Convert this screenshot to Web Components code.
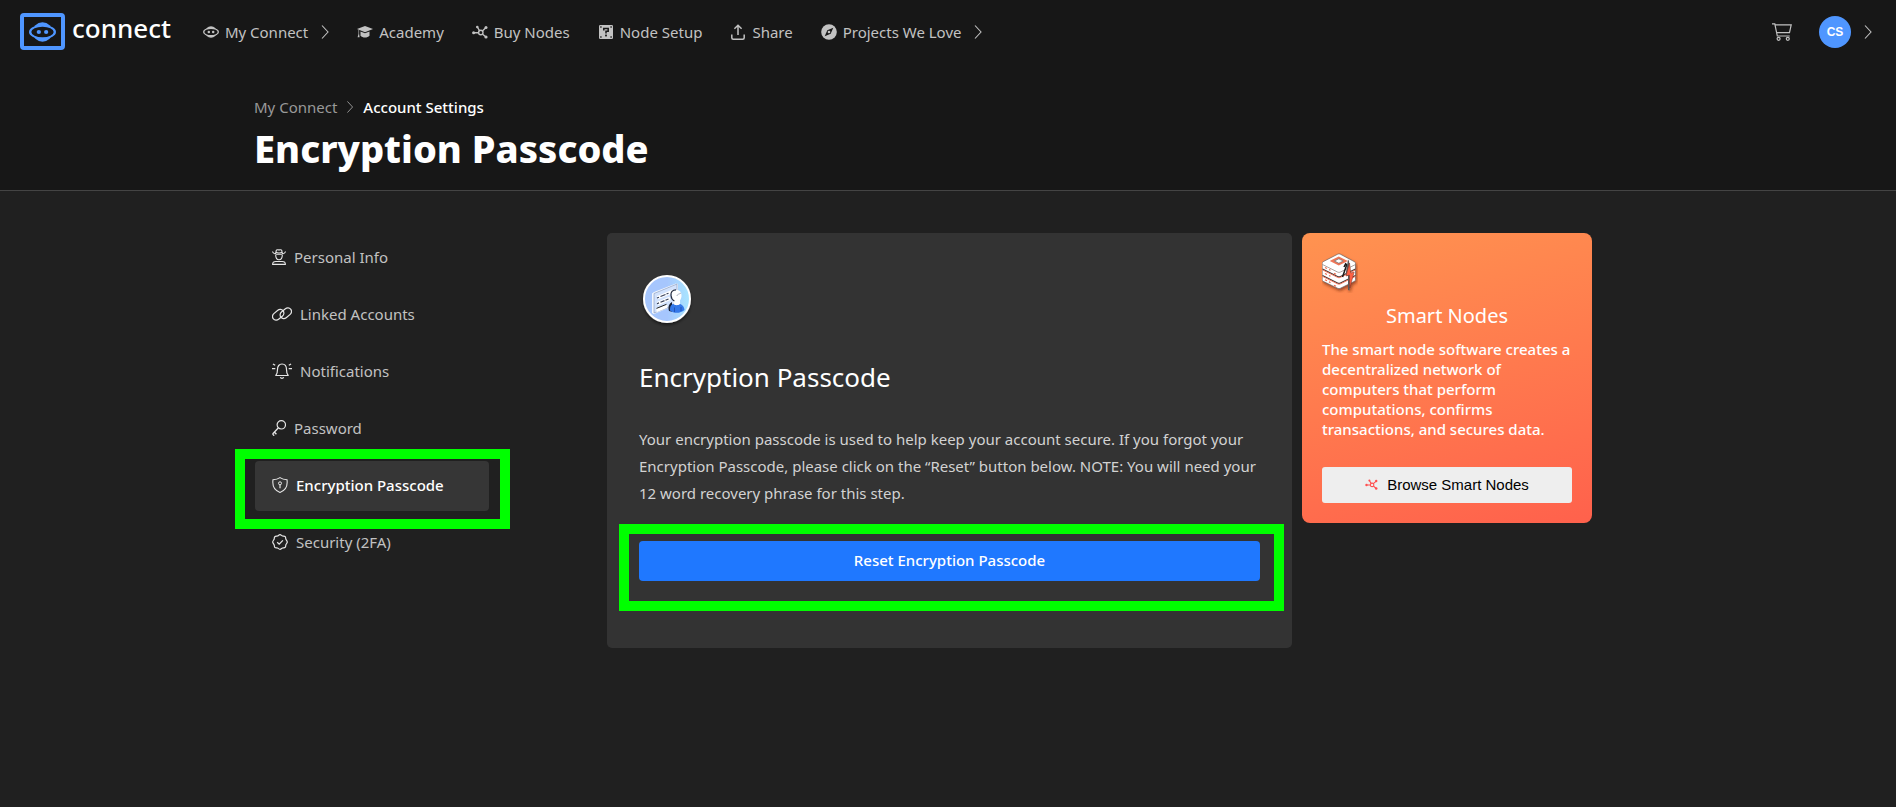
<!DOCTYPE html>
<html lang="en">
<head>
  <meta charset="utf-8">
  <meta name="viewport" content="width=device-width, initial-scale=1">
  <title>Encryption Passcode - connect</title>
  <style>
    body {
      margin: 0;
      min-height: 100vh;
      background: #202020;
      color: #fff;
      font-family: "Noto Sans", sans-serif;
      font-size: 15px;
      line-height: 24px;
    }
  </style>
</head>
<body>
  <account-page></account-page>

  <script>
    const icons = {
      bot: { box: '0 0 28 20', body: `
        <ellipse cx="14" cy="10" rx="14" ry="7.2" fill="currentColor"/>
        <ellipse cx="14" cy="10" rx="10.4" ry="10" fill="currentColor"/>
        <ellipse cx="14" cy="10" rx="11.6" ry="5.4" fill="#171717"/>
        <circle cx="10.2" cy="10" r="2.2" fill="currentColor"/>
        <circle cx="17.8" cy="10" r="2.2" fill="currentColor"/>` },
      chevron: { box: '0 0 8 14', body: `
        <path d="M1 .5 7 7l-6 6.5" fill="none" stroke="currentColor" stroke-width="1.1"/>` },
      academy: { box: '0 0 16 14', body: `
        <path d="M8 1 0 4l8 3.2L16 4z" fill="currentColor"/>
        <path d="M3.5 6.400v4.400C4.600 12 6.200 12.600 8 12.600s3.400-.6 4.500-1.800V6.400L8 8.200z" fill="currentColor"/>
        <path d="M1.500 4.800v4.200l-.9 3.200h2L2.100 9V5" fill="currentColor"/>` },
      nodes: { box: '0 0 16 14', body: `
        <g stroke="currentColor" stroke-width="1.4" fill="none">
          <path d="M1.500 7.700h5M5.300 2l2.200 3.600M14 2.600l-3.600 3.400M14 12l-3.400-2.800"/>
          <circle cx="8.800" cy="7.500" r="2.200"/>
        </g>
        <g fill="currentColor">
          <circle cx="1.600" cy="7.700" r="1.500"/><circle cx="5.300" cy="2" r="1.300"/>
          <circle cx="14" cy="2.600" r="1.500"/><circle cx="14" cy="12" r="1.600"/>
        </g>` },
      setup: { box: '-1 0 16 14', body: `
        <rect width="14" height="14" rx="1.2" fill="currentColor"/>
        <g fill="#171717">
          <rect x="1.200" y="1.300" width="1.400" height="1.400"/><rect x="11.400" y="1.300" width="1.400" height="1.400"/>
          <rect x="1.200" y="11.300" width="1.400" height="1.400"/><rect x="11.400" y="11.300" width="1.400" height="1.400"/>
          <rect x="6.100" y="9.600" width="1.800" height="1.800"/>
        </g>
        <path d="M4.800 5.600V3.500h4.400v2.800H7v2.200" fill="none" stroke="#171717" stroke-width="1.5"/>` },
      share: { box: '-1 0 16 16', body: `
        <path d="M7 11V1.300M3.400 4.800 7 1.200l3.600 3.600M.8 10.500v3.200c0 .9.600 1.500 1.500 1.500h9.400c.9 0 1.500-.6 1.500-1.500v-3.200"
          fill="none" stroke="currentColor" stroke-width="1.5"/>` },
      compass: { box: '0 0 16 16', body: `
        <circle cx="8" cy="8" r="7.8" fill="currentColor"/>
        <path d="M12.300 3.700 9.700 9.700l-6 2.600 2.600-6z" fill="#171717"/>
        <circle cx="8" cy="8" r="1.300" fill="currentColor"/>` },
      cart: { box: '0 0 20 18', body: `
        <g fill="none" stroke="currentColor" stroke-width="1.2">
          <path d="M0 .8h2.800l2.500 12.200h12.400M3.200 1.800h16l-1.700 7.800H4.700"/>
          <circle cx="6.600" cy="15.800" r="1.500"/><circle cx="15.800" cy="15.800" r="1.500"/>
        </g>` },
      spy: { box: '0 0 14 16', body: `
        <g fill="none" stroke="currentColor" stroke-width="1.1" stroke-linejoin="round">
          <path d="M.5 2.500C1 4.700 3.500 5.300 7 5.300s6-.6 6.500-2.800M3.600 4.500 4.300 1.300C4.900.2 6 .8 7 1c1-.2 2.100-.8 2.700.3l.7 3.200"/>
          <path d="M3.900 3.300c1.800.8 4.400.8 6.200 0M3.700 6c0 3 1.400 4.700 3.300 4.700S10.300 9 10.300 6"/>
          <path d="M.6 15.400c0-2 1.200-2.900 3.200-2.900h6.400c2 0 3.200.9 3.200 2.900z"/>
        </g>` },
      link: { box: '0 0 20 14', body: `
        <g fill="none" stroke="currentColor" stroke-width="1.2">
          <rect x="-6.300" y="-3.700" width="12.600" height="7.400" rx="3.700" transform="translate(6.200 7.800) rotate(-40)"/>
          <rect x="-6.300" y="-3.700" width="12.600" height="7.400" rx="3.700" transform="translate(13.800 6.200) rotate(-40)"/>
        </g>` },
      bell: { box: '0 0 20 16', body: `
        <path d="M3.800 12.500c1.400-1.500 1.700-3 1.700-6C5.500 3.300 7.300 1 10 1s4.500 2.300 4.500 5.500c0 3 .3 4.500 1.700 6zM8.300 14.300c.6 1.300 2.800 1.300 3.400 0M0 5.700h3.300M.9 1l2.300 1.300M20 5.700h-3.300M19.100 1l-2.300 1.300"
          fill="none" stroke="currentColor" stroke-width="1.2" stroke-linejoin="round"/>` },
      key: { box: '0 0 14 16', body: `
        <path d="M6.200 8 .6 14M2.400 12l2 2.200M.6 14l1.600 1.700" fill="none" stroke="currentColor" stroke-width="1.3"/>
        <circle cx="9.300" cy="4.800" r="4.200" fill="none" stroke="currentColor" stroke-width="1.2"/>` },
      shield: { box: '0 0 16 16', body: `
        <path d="M8 .6C6 2 3.700 2.600 1 2.700.2 8.500 2 13.300 8 15.400c6-2.100 7.800-6.900 7-12.700C12.300 2.600 10 2 8 .6z"
          fill="none" stroke="currentColor" stroke-width="1.1"/>
        <circle cx="8" cy="6.300" r="1.500" fill="none" stroke="currentColor"/>
        <path d="M8 7.800v3.400" stroke="currentColor" stroke-width="1.2"/>` },
      verified: { box: '0 0 16 16', body: `
        <path d="M8 .7c1.100 0 1.600 1 2.500 1.300s2-.1 2.700.7.300 1.800.7 2.600S15.300 7 15.300 8s-1 1.800-1.400 2.700.1 1.900-.7 2.600-1.800.3-2.700.7S9.100 15.300 8 15.300s-1.600-1-2.500-1.300-2 .1-2.700-.7-.3-1.800-.7-2.600S.7 9 .7 8s1-1.800 1.400-2.700-.1-1.900.7-2.600 1.800-.3 2.700-.7S6.900.7 8 .7z"
          fill="none" stroke="currentColor" stroke-width="1.2"/>
        <path d="m5.200 8.200 2 1.900 3.700-3.700" fill="none" stroke="currentColor" stroke-width="1.3"/>` },
      profile: { box: '0 0 56 56', body: `
        <defs>
          <linearGradient id="sky"><stop offset=".5" stop-color="#a6c6fd"/><stop offset="1" stop-color="#a8e6ff"/></linearGradient>
          <filter id="drop" x="-20%" y="-20%" width="140%" height="140%"><feDropShadow dx="0" dy="2" stdDeviation="1.5" flood-opacity=".5"/></filter>
        </defs>
        <circle cx="28" cy="28" r="23" fill="url(#sky)" stroke="#fff" stroke-width="2" filter="url(#drop)"/>
        <path d="M13 22.500 15 21 37 12.500 39 13v20L15 43l-2-1z" fill="#f4f8ff"/>
        <path d="M15 22.500 38 13v20L15 42z" fill="#d2e2fc" stroke="#8595b5" stroke-width=".6"/>
        <path d="M18.500 26.800 34.500 20M18.500 32.600 31 27.400" stroke="#fff" stroke-width="3.4"/>
        <path d="m18 27 2-.8m1.500-.7 5-2m1-.5 2-.8M18 32.700l2-.8m1.500-.7 4-1.600m1-.4 3-1.200" fill="none" stroke="#38415a" stroke-width="1.2"/>
        <path d="m17.500 37.600 9-3.700c1.500-.5 2 .3 2 1.400s-.8 1.800-2 2.300l-9 3.700z" fill="#fff"/>
        <path d="m17.500 37.400 10-4.100" stroke="#222"/>
        <path d="M33 31c-3 1.500-4.300 5-3 9l3 .7z" fill="#172036"/>
        <path d="M31 39.500c-.3-4.500 1.500-7 6-7.500 5 .4 8 2.500 8.500 7-4 3.500-10.500 3.900-14.500.5z" fill="#3478e8"/>
        <path d="M35.500 36.500v4.500M42 36v4" stroke="#1f4ba8" stroke-width=".8"/>
        <path d="M34.500 29h6.500v4c-1.700 1.600-4.800 1.600-6.500 0z" fill="#fff"/>
        <path d="M32.500 24.500c0-4 2.400-5.500 5.300-5.500 3.200 0 4.700 2.500 4.700 5.500s-1.500 6.300-4.300 6.300c-3.300 0-5.700-2.500-5.700-6.300z" fill="#fff"/>
        <path d="M37 18.800c-3.600 0-5.400 2.600-5 5.700.3 3 1.700 4.700 3.400 5.500" fill="none" stroke="#252c3d" stroke-width="1.2"/>
        <path d="M42 22c-1.500 1.200-3.500.8-4.200 3" fill="none" stroke="#8b94a8" stroke-width=".7"/>` },
      server: { box: '0 0 36 40', body: `
        <defs><filter id="soft" x="-20%" y="-20%" width="150%" height="150%"><feDropShadow dx="1" dy="2" stdDeviation="1.4" flood-color="#6b2616" flood-opacity=".65"/></filter></defs>
        <g filter="url(#soft)">
          <path d="M1.500 8.500 15.500 1.300c1-.5 2-.5 3 0L32 8.500c1 .5 1.500 1 1.500 2v16c0 1-.5 1.500-1.500 2L18.500 35.200c-1 .5-2 .5-3 0L1.500 28.500c-1-.5-1.300-1-1.300-2v-16c0-1 .3-1.500 1.300-2z" fill="#fff" stroke="#5b5350" stroke-width=".6"/>
          <path d="M.5 11.500 15.500 19c1 .5 2 .5 3 0l15-7.500" fill="none" stroke="#8a7d78" stroke-width=".7"/>
          <path d="M.5 16 15.500 23.500c1 .5 2 .5 3 0L33.500 16M.5 22.500 15.500 30c1 .5 2 .5 3 0l15-7.500" fill="none" stroke="#3f3836" stroke-width="1.2"/>
          <path d="M.5 16.800 15.500 24.300c1 .5 2 .5 3 0l15-7.500M.5 23.300l15 7.500c1 .5 2 .5 3 0l15-7.500" fill="none" stroke="#f5694a" stroke-width=".9"/>
          <path d="m10 8 6.800-3.400L23.600 8l-6.800 3.400z" fill="#fff" stroke="#ef7658" stroke-width="2"/>
          <path d="m12.500 8 4.300-2.200L21.100 8l-4.300 2.200z" fill="#fff" stroke="#555" stroke-width=".6"/>
          <path d="M3 14.500l2 1M7 16.500l1.500.8M3 20.500l2 1M7 22.500l1.500.8M3 26.800l2 1M7 28.800l1.500.8M12 20.300l2 1M12 32.200l2 1" stroke="#ef6b4c" stroke-width="1.2"/>
          <path d="m25 11-4.500 13M22 14l2-4" stroke="#1a1a1a" stroke-width="1.5"/>
          <path d="M26 6.500 23.500 22l2.500 1v14l1.500.5L28.500 22 27 8z" fill="#5a5a5a"/>
          <path d="m27.500 10-3.500 13 3.400-1 .4 13 4.400-16-3.400 1z" fill="#ff6244" stroke="#803224" stroke-width=".5"/>
        </g>` }
    };

    // <ui-icon name="cart" size="20x18">
    class UiIcon extends HTMLElement {
      constructor() {
        super();
        this.attachShadow({ mode: 'open' });
      }

      connectedCallback() {
        const icon = icons[this.getAttribute('name')];
        const [width, height] = this.getAttribute('size').split('x');
        this.shadowRoot.innerHTML = `
          <style>
            :host { display: block; flex: none; }
            svg { display: block; }
          </style>
          <svg width="${width}" height="${height}" viewBox="${icon.box}" aria-hidden="true">${icon.body}</svg>
        `;
      }
    }

    class BrandLogo extends HTMLElement {
      constructor() {
        super();
        this.attachShadow({ mode: 'open' });
        this.shadowRoot.innerHTML = `
          <style>
            :host { display: block; }
            a {
              display: flex;
              gap: 7px;
              color: #fff;
              font-size: 26px;
              font-weight: 500;
              line-height: 30px;
              text-decoration: none;
            }
            .mark {
              box-sizing: border-box;
              display: grid;
              place-items: center;
              width: 45px;
              height: 37px;
              border: 4px solid #4f96ff;
              border-radius: 4px;
              color: #4f96ff;
            }
          </style>
          <a href="#"><span class="mark"><ui-icon name="bot" size="27x20"></ui-icon></span>connect</a>
        `;
      }
    }

    class NavLink extends HTMLElement {
      constructor() {
        super();
        this.attachShadow({ mode: 'open' });
      }

      connectedCallback() {
        const more = this.hasAttribute('more');
        this.shadowRoot.innerHTML = `
          <style>
            :host { display: block; }
            a {
              display: flex;
              align-items: center;
              gap: 6px;
              color: #c2c2c2;
              text-decoration: none;
              white-space: nowrap;
            }
            a:hover { color: #fff; }
            .more { margin-left: 7px; }
          </style>
          <a href="#">
            <ui-icon name="${this.getAttribute('icon')}" size="${this.getAttribute('size')}"></ui-icon>
            <slot></slot>
            ${more ? '<ui-icon class="more" name="chevron" size="8x14"></ui-icon>' : ''}
          </a>
        `;
      }
    }

    class TopBar extends HTMLElement {
      constructor() {
        super();
        this.attachShadow({ mode: 'open' });
        this.shadowRoot.innerHTML = `
          <style>
            :host {
              display: flex;
              align-items: center;
              height: 63px;
              padding: 0 24px 0 20px;
            }
            nav {
              display: flex;
              gap: 28px;
              margin-left: 32px;
            }
            .tools {
              display: flex;
              align-items: center;
              margin-left: auto;
              color: #c2c2c2;
            }
            button {
              display: flex;
              align-items: center;
              gap: 13px;
              padding: 0;
              border: 0;
              background: none;
              color: inherit;
              cursor: pointer;
            }
            .account { margin-left: 27px; }
            .avatar {
              width: 32px;
              border-radius: 50%;
              background: #4f96ff;
              color: #fff;
              font: 700 12px/32px "Liberation Sans", sans-serif;
              text-align: center;
            }
          </style>
          <brand-logo></brand-logo>
          <nav>
            <nav-link icon="bot" size="16x12" more>My Connect</nav-link>
            <nav-link icon="academy" size="16x14">Academy</nav-link>
            <nav-link icon="nodes" size="16x14">Buy Nodes</nav-link>
            <nav-link icon="setup" size="16x14">Node Setup</nav-link>
            <nav-link icon="share" size="16x16">Share</nav-link>
            <nav-link icon="compass" size="16x16" more>Projects We Love</nav-link>
          </nav>
          <div class="tools">
            <button aria-label="Cart"><ui-icon name="cart" size="20x18"></ui-icon></button>
            <button class="account"><span class="avatar">CS</span><ui-icon name="chevron" size="8x14"></ui-icon></button>
          </div>
        `;
      }
    }

    class PageHeading extends HTMLElement {
      constructor() {
        super();
        this.attachShadow({ mode: 'open' });
        this.shadowRoot.innerHTML = `
          <style>
            :host {
              display: block;
              box-sizing: border-box;
              max-width: 1388px;
              margin: 0 auto;
              padding: 32px 0 19px;
            }
            nav {
              display: flex;
              align-items: center;
              gap: 9px;
              color: #999;
            }
            a { color: #999; text-decoration: none; }
            .here { color: #fff; font-weight: 500; }
            h1 {
              margin: 6px 0 0;
              font-size: 38px;
              font-weight: 800;
              line-height: 46px;
            }
          </style>
          <nav aria-label="Breadcrumb">
            <a href="#">My Connect</a>
            <ui-icon name="chevron" size="8x12"></ui-icon>
            <span class="here">Account Settings</span>
          </nav>
          <h1><slot></slot></h1>
        `;
      }
    }

    class SideLink extends HTMLElement {
      constructor() {
        super();
        this.attachShadow({ mode: 'open' });
      }

      connectedCallback() {
        this.shadowRoot.innerHTML = `
          <style>
            :host { display: block; position: relative; }
            a {
              display: flex;
              align-items: center;
              gap: 8px;
              height: 47px;
              padding: 0 17px 3px;
              border-radius: 4px;
              color: #c2c2c2;
              text-decoration: none;
            }
            ui-icon { color: #e6e6e6; }
            :host([active]) a {
              background: #363636;
              color: #fff;
              font-weight: 500;
            }
          </style>
          <a href="#">
            <ui-icon name="${this.getAttribute('icon')}" size="${this.getAttribute('size')}"></ui-icon>
            <span><slot></slot></span>
          </a>
          <slot name="frame"></slot>
        `;
      }
    }

    // green outline laid over the control it wraps
    class HighlightFrame extends HTMLElement {
      constructor() {
        super();
        this.attachShadow({ mode: 'open' });
        this.shadowRoot.innerHTML = `
          <style>
            :host {
              position: absolute;
              inset: var(--frame-inset);
              border: 10px solid #0f0;
              pointer-events: none;
            }
          </style>
        `;
      }
    }

    class SideMenu extends HTMLElement {
      constructor() {
        super();
        this.attachShadow({ mode: 'open' });
        this.shadowRoot.innerHTML = `
          <style>
            :host { display: block; }
            nav {
              display: flex;
              flex-direction: column;
              gap: 7px;
            }
            highlight-frame { --frame-inset: -12px -21px -18px -20px; }
          </style>
          <nav aria-label="Account">
            <side-link icon="spy" size="14x16">Personal Info</side-link>
            <side-link icon="link" size="20x14">Linked Accounts</side-link>
            <side-link icon="bell" size="20x16">Notifications</side-link>
            <side-link icon="key" size="14x16">Password</side-link>
            <side-link icon="shield" size="16x16" active>Encryption Passcode<highlight-frame slot="frame"></highlight-frame></side-link>
            <side-link icon="verified" size="16x16">Security (2FA)</side-link>
          </nav>
        `;
      }
    }

    class PasscodeCard extends HTMLElement {
      constructor() {
        super();
        this.attachShadow({ mode: 'open' });
        this.shadowRoot.innerHTML = `
          <style>
            :host {
              display: block;
              padding: 38px 32px 67px;
              border-radius: 5px;
              background: #333;
            }
            h2 {
              margin: 32px 0 31px;
              font-size: 26px;
              font-weight: 400;
              line-height: 36px;
            }
            p {
              margin: 0 0 34px;
              color: #d2d2d2;
              line-height: 27px;
            }
            .action { position: relative; }
            button {
              display: block;
              width: 100%;
              height: 40px;
              padding: 0 0 3px;
              border: 0;
              border-radius: 4px;
              background: #1f78ff;
              color: #fff;
              font: inherit;
              font-weight: 500;
              cursor: pointer;
            }
            highlight-frame { --frame-inset: -17px -24px -30px -20px; }
          </style>
          <ui-icon name="profile" size="56x56"></ui-icon>
          <h2>Encryption Passcode</h2>
          <p><slot></slot></p>
          <div class="action">
            <button>Reset Encryption Passcode</button>
            <highlight-frame></highlight-frame>
          </div>
        `;
      }
    }

    class SmartNodes extends HTMLElement {
      constructor() {
        super();
        this.attachShadow({ mode: 'open' });
        this.shadowRoot.innerHTML = `
          <style>
            :host {
              display: block;
              padding: 20px;
              border-radius: 8px;
              background: linear-gradient(165deg, #ff9350, #ff614c);
            }
            h3 {
              margin: 9px 0;
              font-size: 20px;
              font-weight: 400;
              line-height: 28px;
              text-align: center;
            }
            p {
              margin: 0 0 28px;
              font-weight: 500;
              line-height: 20px;
            }
            button {
              display: flex;
              align-items: center;
              justify-content: center;
              gap: 9px;
              width: 100%;
              height: 36px;
              padding: 0 0 2px;
              border: 0;
              border-radius: 3px;
              background: #eee;
              color: #000;
              font: 15px "Liberation Sans", sans-serif;
              cursor: pointer;
            }
            button ui-icon { color: #ff4f4f; }
          </style>
          <ui-icon name="server" size="36x40"></ui-icon>
          <h3>Smart Nodes</h3>
          <p><slot></slot></p>
          <button><ui-icon name="nodes" size="13x11"></ui-icon>Browse Smart Nodes</button>
        `;
      }
    }

    class AccountPage extends HTMLElement {
      constructor() {
        super();
        this.attachShadow({ mode: 'open' });
        this.shadowRoot.innerHTML = `
          <style>
            :host { display: block; }
            header {
              border-bottom: 1px solid #444;
              background: #171717;
            }
            main {
              box-sizing: border-box;
              display: grid;
              grid-template-columns: 234px minmax(0, 1fr) 290px;
              align-items: start;
              gap: 10px;
              max-width: 1386px;
              margin: 0 auto;
              padding: 42px 49px 42px 0;
            }
            passcode-card { margin-left: 108px; }
          </style>
          <header>
            <top-bar></top-bar>
            <page-heading>Encryption Passcode</page-heading>
          </header>
          <main>
            <side-menu></side-menu>
            <passcode-card>Your encryption passcode is used to help keep your account secure. If you forgot your Encryption Passcode, please click on the “Reset” button below. NOTE: You will need your 12 word recovery phrase for this step.</passcode-card>
            <smart-nodes>The smart node software creates a decentralized network of computers that perform computations, confirms transactions, and secures data.</smart-nodes>
          </main>
        `;
      }
    }

    customElements.define('ui-icon', UiIcon);
    customElements.define('brand-logo', BrandLogo);
    customElements.define('nav-link', NavLink);
    customElements.define('top-bar', TopBar);
    customElements.define('page-heading', PageHeading);
    customElements.define('side-link', SideLink);
    customElements.define('highlight-frame', HighlightFrame);
    customElements.define('side-menu', SideMenu);
    customElements.define('passcode-card', PasscodeCard);
    customElements.define('smart-nodes', SmartNodes);
    customElements.define('account-page', AccountPage);
  </script>
</body>
</html>
